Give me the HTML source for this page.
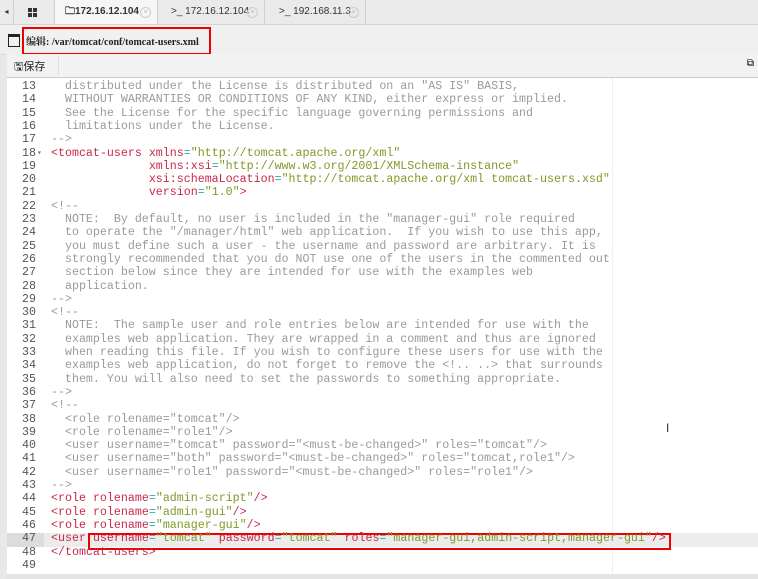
<!DOCTYPE html>
<html><head><meta charset="utf-8"><style>
body{margin:0;width:758px;height:579px;overflow:hidden;background:#e8e8e8;font-family:"Liberation Sans","Noto Sans CJK SC",sans-serif;position:relative}
.tabs{position:absolute;left:0;top:0;width:758px;height:24px;background:#eaeaea;border-bottom:1px solid #d4d4d4}
.tab{position:absolute;top:0;height:24px;border-right:1px solid #d0d0d0;font-size:10px;color:#333;line-height:24px;white-space:nowrap}
.x{position:absolute;right:6px;top:7px;width:9px;height:9px;border:1px solid #ccc;border-radius:50%;font-size:7px;line-height:9px;text-align:center;color:#bbb;font-weight:normal}
.title{position:absolute;left:0;top:25px;width:758px;height:29px;background:#f0f0f0;border-bottom:1px solid #ddd}
.tb{position:absolute;left:7px;top:54px;width:751px;height:23px;background:#f2f2f2;border-bottom:1px solid #ccc}
.ed{position:absolute;left:7px;top:78px;width:751px;height:496px;background:#fff}
.l{position:absolute;left:0;height:13.3px;white-space:pre;font-family:"Liberation Mono",monospace;font-size:11.65px;line-height:13.3px}
.n{position:absolute;width:36px;text-align:right;color:#555;font-family:"Liberation Mono",monospace;font-size:11.65px;line-height:13.3px}
.c{color:#9a9a9a}.t{color:#c8284a}.a{color:#c8284a}.v{color:#7f9a2a}.e{color:#3aa}
.sq{position:absolute;width:4px;height:4px;background:#333}
</style></head><body>
<div class="tabs">
<div class="tab" style="left:0;width:13px;font-size:8px;text-align:center">◂</div>
<div class="tab" style="left:14px;width:40px"><div class="sq" style="left:14px;top:8px"></div><div class="sq" style="left:19px;top:8px"></div><div class="sq" style="left:14px;top:13px"></div><div class="sq" style="left:19px;top:13px"></div></div>
<div class="tab" style="left:55px;width:103px;background:#f6f6f6;padding-left:10px;font-weight:bold;box-sizing:border-box">🗀172.16.12.104<span class="x">×</span></div>
<div class="tab" style="left:159px;width:106px;padding-left:12px;box-sizing:border-box">&gt;_ 172.16.12.104<span class="x">×</span></div>
<div class="tab" style="left:266px;width:100px;padding-left:13px;box-sizing:border-box">&gt;_ 192.168.11.3<span class="x">×</span></div>
</div>
<div class="title">
<div style="position:absolute;left:8px;top:9px;width:10px;height:9px;border:1px solid #222;border-top-width:3px"></div>
<div style="position:absolute;left:26px;top:8px;font-size:10px;font-weight:bold;font-family:'Liberation Serif','Noto Serif CJK SC',serif;color:#222">编辑: /var/tomcat/conf/tomcat-users.xml</div>
<div style="position:absolute;left:22px;top:2px;width:185px;height:24px;border:2px solid #e00"></div>
</div>
<div class="tb"><div style="position:absolute;left:7px;top:4px;font-size:11px;color:#222">🖫保存</div><div style="position:absolute;left:51px;top:2px;width:1px;height:19px;background:#ddd"></div><div style="position:absolute;right:4px;top:4px;font-size:10px">⧉</div></div>
<div class="ed"></div>
<div style="position:absolute;left:612px;top:78px;width:1px;height:496px;background:#f0f0f0"></div>
<div style="position:absolute;left:7px;top:533px;width:751px;height:14px;background:#ececec"></div>
<div style="position:absolute;left:7px;top:533px;width:37px;height:14px;background:#dcdcdc"></div>
<div style="position:absolute;left:88px;top:533px;width:579px;height:13px;border:2px solid #e00"></div>
<div style="position:absolute;left:7px;top:574px;width:751px;height:5px;background:#e4e4e4"></div>
<div style="position:absolute;left:666px;top:421px;font-size:12px;color:#333">I</div>
<div style="position:absolute;left:0;top:80px">
<div class="n" style="top:0">13</div><div class="l c" style="left:51px;top:0">  distributed under the License is distributed on an "AS IS" BASIS,</div>
<div class="n" style="top:13.3px">14</div><div class="l c" style="left:51px;top:13.3px">  WITHOUT WARRANTIES OR CONDITIONS OF ANY KIND, either express or implied.</div>
<div class="n" style="top:26.6px">15</div><div class="l c" style="left:51px;top:26.6px">  See the License for the specific language governing permissions and</div>
<div class="n" style="top:39.9px">16</div><div class="l c" style="left:51px;top:39.9px">  limitations under the License.</div>
<div class="n" style="top:53.2px">17</div><div class="l c" style="left:51px;top:53.2px">--&gt;</div>
<div class="n" style="top:66.5px">18</div><div class="l" style="left:37px;top:66.5px;font-size:8px;color:#777">▾</div><div class="l" style="left:51px;top:66.5px"><span class="t">&lt;tomcat-users</span> <span class="a">xmlns</span><span class="e">=</span><span class="v">"http://tomcat.apache.org/xml"</span></div>
<div class="n" style="top:79.8px">19</div><div class="l" style="left:51px;top:79.8px">              <span class="a">xmlns:xsi</span><span class="e">=</span><span class="v">"http://www.w3.org/2001/XMLSchema-instance"</span></div>
<div class="n" style="top:93.1px">20</div><div class="l" style="left:51px;top:93.1px">              <span class="a">xsi:schemaLocation</span><span class="e">=</span><span class="v">"http://tomcat.apache.org/xml tomcat-users.xsd"</span></div>
<div class="n" style="top:106.4px">21</div><div class="l" style="left:51px;top:106.4px">              <span class="a">version</span><span class="e">=</span><span class="v">"1.0"</span><span class="t">&gt;</span></div>
<div class="n" style="top:119.7px">22</div><div class="l c" style="left:51px;top:119.7px">&lt;!--</div>
<div class="n" style="top:133px">23</div><div class="l c" style="left:51px;top:133px">  NOTE:  By default, no user is included in the "manager-gui" role required</div>
<div class="n" style="top:146.3px">24</div><div class="l c" style="left:51px;top:146.3px">  to operate the "/manager/html" web application.  If you wish to use this app,</div>
<div class="n" style="top:159.6px">25</div><div class="l c" style="left:51px;top:159.6px">  you must define such a user - the username and password are arbitrary. It is</div>
<div class="n" style="top:172.9px">26</div><div class="l c" style="left:51px;top:172.9px">  strongly recommended that you do NOT use one of the users in the commented out</div>
<div class="n" style="top:186.2px">27</div><div class="l c" style="left:51px;top:186.2px">  section below since they are intended for use with the examples web</div>
<div class="n" style="top:199.5px">28</div><div class="l c" style="left:51px;top:199.5px">  application.</div>
<div class="n" style="top:212.8px">29</div><div class="l c" style="left:51px;top:212.8px">--&gt;</div>
<div class="n" style="top:226.1px">30</div><div class="l c" style="left:51px;top:226.1px">&lt;!--</div>
<div class="n" style="top:239.4px">31</div><div class="l c" style="left:51px;top:239.4px">  NOTE:  The sample user and role entries below are intended for use with the</div>
<div class="n" style="top:252.7px">32</div><div class="l c" style="left:51px;top:252.7px">  examples web application. They are wrapped in a comment and thus are ignored</div>
<div class="n" style="top:266px">33</div><div class="l c" style="left:51px;top:266px">  when reading this file. If you wish to configure these users for use with the</div>
<div class="n" style="top:279.3px">34</div><div class="l c" style="left:51px;top:279.3px">  examples web application, do not forget to remove the &lt;!.. ..&gt; that surrounds</div>
<div class="n" style="top:292.6px">35</div><div class="l c" style="left:51px;top:292.6px">  them. You will also need to set the passwords to something appropriate.</div>
<div class="n" style="top:305.9px">36</div><div class="l c" style="left:51px;top:305.9px">--&gt;</div>
<div class="n" style="top:319.2px">37</div><div class="l c" style="left:51px;top:319.2px">&lt;!--</div>
<div class="n" style="top:332.5px">38</div><div class="l c" style="left:51px;top:332.5px">  &lt;role rolename="tomcat"/&gt;</div>
<div class="n" style="top:345.8px">39</div><div class="l c" style="left:51px;top:345.8px">  &lt;role rolename="role1"/&gt;</div>
<div class="n" style="top:359.1px">40</div><div class="l c" style="left:51px;top:359.1px">  &lt;user username="tomcat" password="&lt;must-be-changed&gt;" roles="tomcat"/&gt;</div>
<div class="n" style="top:372.4px">41</div><div class="l c" style="left:51px;top:372.4px">  &lt;user username="both" password="&lt;must-be-changed&gt;" roles="tomcat,role1"/&gt;</div>
<div class="n" style="top:385.7px">42</div><div class="l c" style="left:51px;top:385.7px">  &lt;user username="role1" password="&lt;must-be-changed&gt;" roles="role1"/&gt;</div>
<div class="n" style="top:399px">43</div><div class="l c" style="left:51px;top:399px">--&gt;</div>
<div class="n" style="top:412.3px">44</div><div class="l" style="left:51px;top:412.3px"><span class="t">&lt;role</span> <span class="a">rolename</span><span class="e">=</span><span class="v">"admin-script"</span><span class="t">/&gt;</span></div>
<div class="n" style="top:425.6px">45</div><div class="l" style="left:51px;top:425.6px"><span class="t">&lt;role</span> <span class="a">rolename</span><span class="e">=</span><span class="v">"admin-gui"</span><span class="t">/&gt;</span></div>
<div class="n" style="top:438.9px">46</div><div class="l" style="left:51px;top:438.9px"><span class="t">&lt;role</span> <span class="a">rolename</span><span class="e">=</span><span class="v">"manager-gui"</span><span class="t">/&gt;</span></div>
<div class="n" style="top:452.2px">47</div><div class="l" style="left:51px;top:452.2px"><span class="t">&lt;user</span> <span class="a">username</span><span class="e">=</span><span class="v">"tomcat"</span> <span class="a">password</span><span class="e">=</span><span class="v">"tomcat"</span> <span class="a">roles</span><span class="e">=</span><span class="v">"manager-gui,admin-script,manager-gui"</span><span class="t">/&gt;</span></div>
<div class="n" style="top:465.5px">48</div><div class="l" style="left:51px;top:465.5px"><span class="t">&lt;/tomcat-users&gt;</span></div>
<div class="n" style="top:478.8px">49</div>
</div>
</body></html>
